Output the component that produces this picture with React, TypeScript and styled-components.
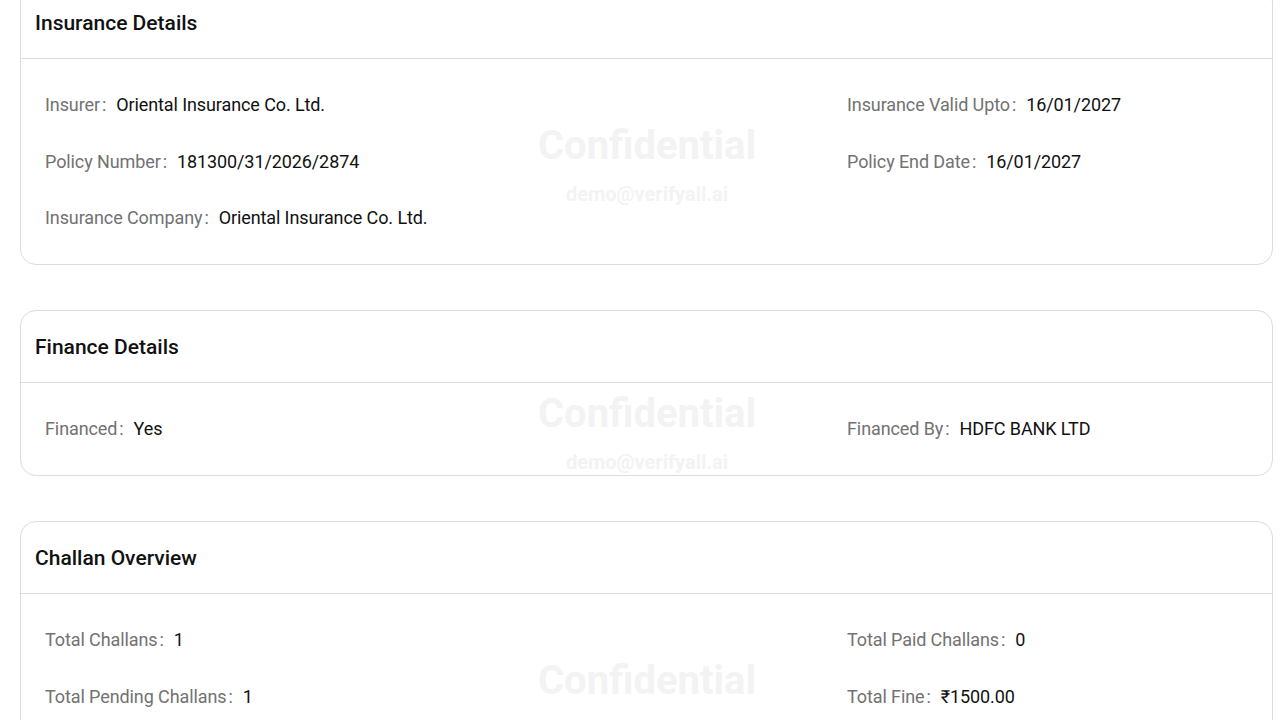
import React from "react";
import styled, { createGlobalStyle } from "styled-components";

const GlobalStyle = createGlobalStyle`
  html, body {
    margin: 0;
    padding: 0;
    background: #ffffff;
    font-family: Roboto, "Noto Sans", "Liberation Sans", sans-serif;
    overflow: hidden;
  }
`;

const Page = styled.div`
  position: relative;
  width: 1280px;
  height: 720px;
  overflow: hidden;
  background: #ffffff;
`;

const Stack = styled.div`
  display: flex;
  flex-direction: column;
  gap: 45px;
  padding: 0 7px 0 20px;
  margin-top: -14px;
`;

const Card = styled.section`
  position: relative;
  background: #ffffff;
  border: 1px solid #dcdcdc;
  border-radius: 16px;
  overflow: hidden;
`;

const CardHeader = styled.header`
  height: 71px;
  display: flex;
  align-items: center;
  padding: 0 14px;
  border-bottom: 1px solid #dcdcdc;
`;

const Title = styled.h2`
  margin: 0;
  font-size: 21px;
  font-weight: 500;
  color: #111111;
`;

const Body = styled.div`
  position: relative;
  display: grid;
  grid-template-columns: 802px 1fr;
  row-gap: 34.5px;
  padding: 35px 24px 35px;
`;

const Field = styled.div<{ $col: number }>`
  grid-column: ${(p) => p.$col};
  display: flex;
  align-items: baseline;
  font-size: 18px;
  line-height: 22px;
  letter-spacing: -0.1px;
  white-space: nowrap;
  position: relative;
  z-index: 1;
`;

const Label = styled.span`
  color: #727272;
`;

const Colon = styled.span`
  color: #727272;
  margin: 0 10px 0 2px;
`;

const Value = styled.span`
  color: #111111;
`;

const Watermark = styled.div<{ $top: number }>`
  position: absolute;
  left: 516px;
  top: ${(p) => p.$top}px;
  width: 220px;
  display: flex;
  flex-direction: column;
  align-items: center;
  pointer-events: none;
  user-select: none;
  color: #f3f3f3;
  font-weight: 700;
  z-index: 0;
`;

const WatermarkMain = styled.span`
  font-size: 40px;
  line-height: 48px;
`;

const WatermarkSub = styled.span`
  font-size: 20px;
  line-height: 24px;
  margin-top: 12px;
`;

type Item = { label: string; value: string; col: number };

type Section = { title: string; items: Item[]; mark: number };

const sections: Section[] = [
  {
    title: "Insurance Details",
    mark: 63,
    items: [
      { label: "Insurer", value: "Oriental Insurance Co. Ltd.", col: 1 },
      { label: "Insurance Valid Upto", value: "16/01/2027", col: 2 },
      { label: "Policy Number", value: "181300/31/2026/2874", col: 1 },
      { label: "Policy End Date", value: "16/01/2027", col: 2 },
      { label: "Insurance Company", value: "Oriental Insurance Co. Ltd.", col: 1 },
    ],
  },
  {
    title: "Finance Details",
    mark: 7,
    items: [
      { label: "Financed", value: "Yes", col: 1 },
      { label: "Financed By", value: "HDFC BANK LTD", col: 2 },
    ],
  },
  {
    title: "Challan Overview",
    mark: 63,
    items: [
      { label: "Total Challans", value: "1", col: 1 },
      { label: "Total Paid Challans", value: "0", col: 2 },
      { label: "Total Pending Challans", value: "1", col: 1 },
      { label: "Total Fine", value: "₹1500.00", col: 2 },
      { label: "Disposed Challans", value: "0", col: 1 },
    ],
  },
];

export default function App() {
  return (
    <Page>
      <GlobalStyle />
      <Stack>
        {sections.map((s) => (
          <Card key={s.title}>
            <CardHeader>
              <Title>{s.title}</Title>
            </CardHeader>
            <Body>
              <Watermark $top={s.mark}>
                <WatermarkMain>Confidential</WatermarkMain>
                <WatermarkSub>demo@verifyall.ai</WatermarkSub>
              </Watermark>
              {s.items.map((it) => (
                <Field key={it.label} $col={it.col}>
                  <Label>{it.label}</Label>
                  <Colon>:</Colon>
                  <Value>{it.value}</Value>
                </Field>
              ))}
            </Body>
          </Card>
        ))}
      </Stack>
    </Page>
  );
}
